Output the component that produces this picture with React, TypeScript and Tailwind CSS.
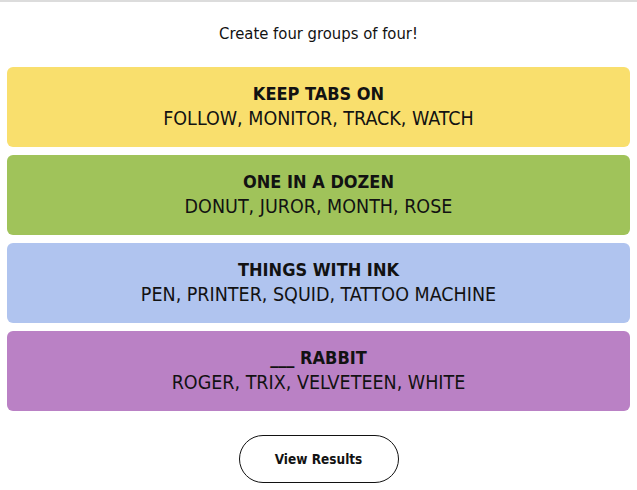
import React from 'react';

type Group = { title: string; words: string[]; color: string };

const groups: Group[] = [
  { title: 'KEEP TABS ON', words: ['FOLLOW', 'MONITOR', 'TRACK', 'WATCH'], color: 'bg-[#f9df6d]' },
  { title: 'ONE IN A DOZEN', words: ['DONUT', 'JUROR', 'MONTH', 'ROSE'], color: 'bg-[#a0c35a]' },
  { title: 'THINGS WITH INK', words: ['PEN', 'PRINTER', 'SQUID', 'TATTOO MACHINE'], color: 'bg-[#b0c4ef]' },
  { title: '___ RABBIT', words: ['ROGER', 'TRIX', 'VELVETEEN', 'WHITE'], color: 'bg-[#ba81c5]' },
];

function SolvedGroup({ group }: { group: Group }) {
  return (
    <div className={`${group.color} flex h-[80px] flex-col items-center justify-center rounded-md pb-[2px] text-[#121212]`}>
      <div className="text-[18px] font-bold leading-[24px]">{group.title}</div>
      <div className="text-[19.5px] leading-[25px]">{group.words.join(', ')}</div>
    </div>
  );
}

export default function App() {
  return (
    <div
      className="min-h-[490px] border-t-2 border-[#dcdcdc] bg-white text-[#121212]"
      style={{ fontFamily: '"DejaVu Sans Condensed", "DejaVu Sans", sans-serif' }}
    >
      <p className="pt-[22px] text-center text-[16.5px] leading-[20px]">Create four groups of four!</p>
      <div className="mt-[23px] flex flex-col gap-[8px] px-[7px]">
        {groups.map((g) => (
          <SolvedGroup key={g.title} group={g} />
        ))}
      </div>
      <div className="mt-[24px] flex justify-center">
        <button className="h-[48px] w-[160px] rounded-full border border-[#121212] bg-white text-[13.5px] font-bold">
          View Results
        </button>
      </div>
    </div>
  );
}
